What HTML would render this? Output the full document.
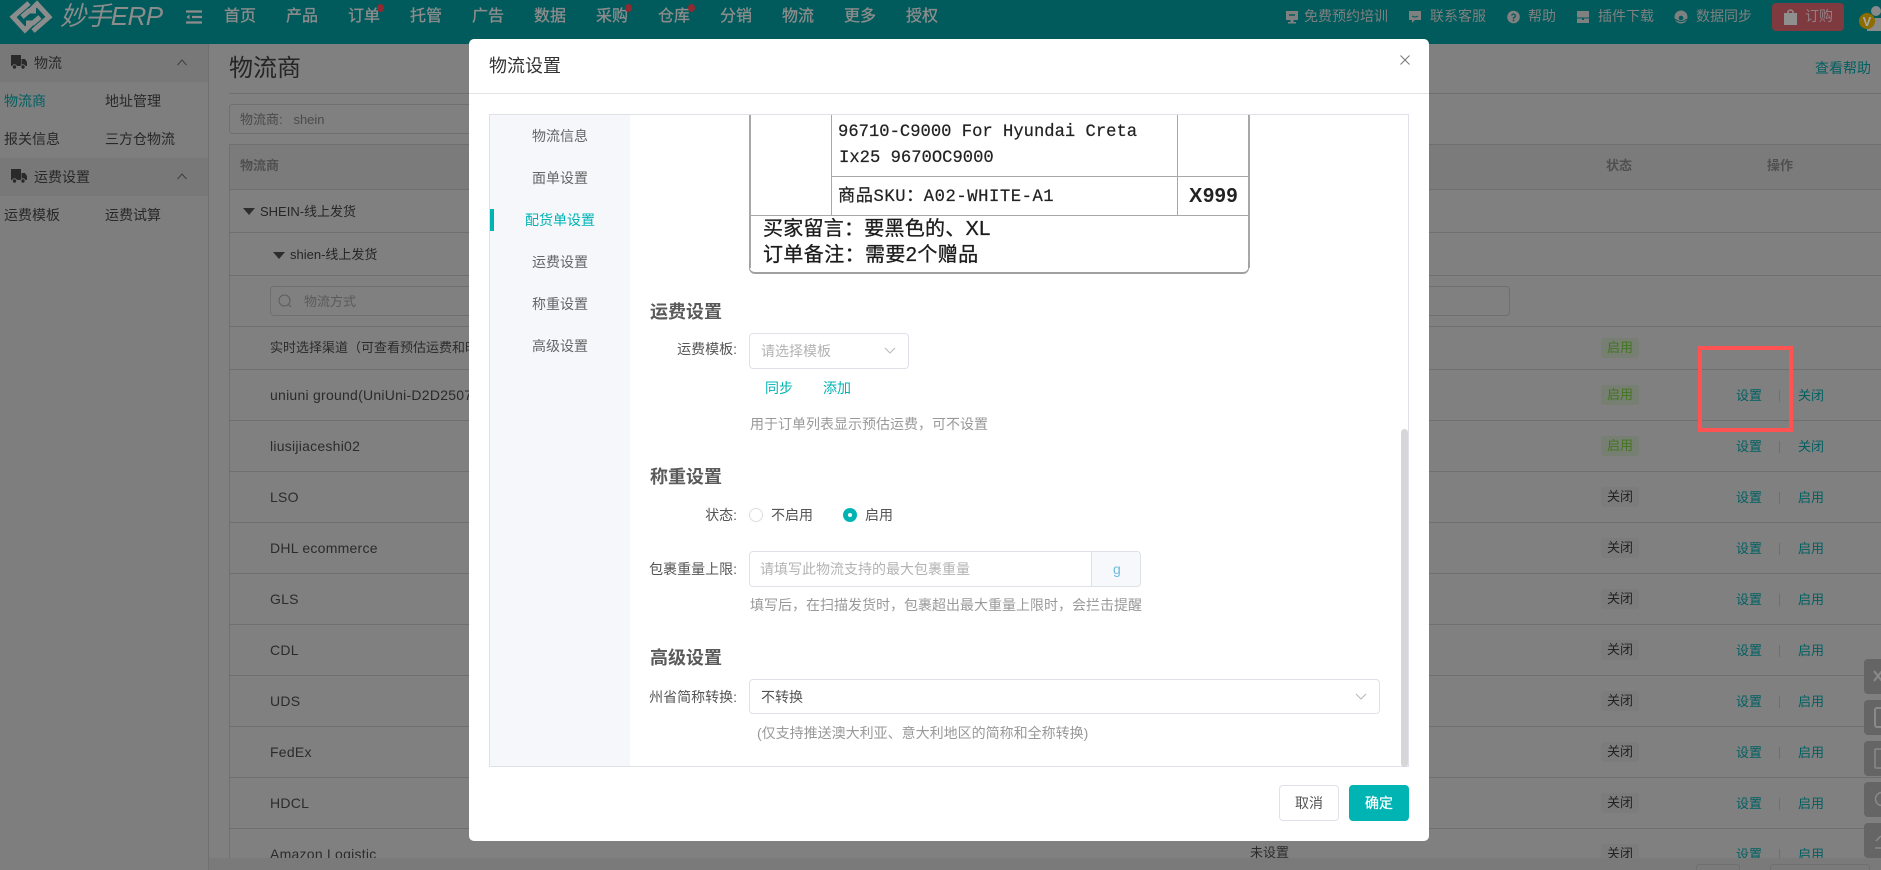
<!DOCTYPE html>
<html lang="zh"><head><meta charset="utf-8"><title>物流设置</title>
<style>
*{box-sizing:border-box}
html,body{margin:0;padding:0;width:1881px;height:870px;overflow:hidden;background:#808080}
body{position:relative;font-family:"Liberation Sans","Noto Sans CJK SC",sans-serif;font-size:14px;color:#262626}
.t{position:absolute;white-space:nowrap;line-height:20px;height:20px}
.b{position:absolute}
.nav{font-size:16px;color:#8d8d8d;-webkit-text-stroke:.3px #8d8d8d;top:7px}
.top{font-size:14px;color:#7f8080;top:6px}
.side{color:#282828}
.tl{color:#006062}
.h{background:#6f6f70;position:absolute;height:1px}
.rowt{left:270px;color:#2b2b2b;font-size:14px;letter-spacing:.25px}
.tag{position:absolute;left:1601px;width:38px;height:20px;border-radius:3px;background:#7c7c7c;color:#222;font-size:13px;line-height:20px;text-align:center}
.tag.g{background:#777f73;color:#42751f}
.op{position:absolute;color:#006062;font-size:13px;line-height:20px;white-space:nowrap;margin-top:1px}
.sep{position:absolute;left:1779px;width:1px;height:12px;background:#6f6f6f;margin-top:1px}
#modal{position:absolute;left:469px;top:39px;width:960px;height:802px;background:#fff;border-radius:5px}
.m{color:#555}
.lab{color:#555;text-align:right;left:600px;width:137px}
.head{font-size:18px;font-weight:bold;color:#5a5a5a;left:650px;line-height:24px;height:24px}
.hint{color:#999;left:750px;font-size:14px}
.in{position:absolute;background:#fff;border:1px solid #dfe1e8;border-radius:4px}
.navm{left:490px;width:140px;text-align:center;color:#666}
.fl{position:absolute;left:1864px;width:17px;height:35px;background:#656565;border-radius:4px 0 0 4px;overflow:hidden}
.mono{font-family:"Liberation Mono","Noto Sans CJK SC",monospace;color:#222;font-size:17.2px;-webkit-text-stroke:.2px #222}
.lb{position:absolute;background:#a8a8a8}
.big{font-size:20px;color:#1c1c1c;-webkit-text-stroke:.3px #1c1c1c;letter-spacing:.25px}
</style></head><body>

<!-- header -->
<div class="b" style="left:0;top:0;width:1881px;height:44px;background:#015a5b"></div>
<svg class="b" style="left:8px;top:0" width="46" height="34" viewBox="0 0 46 34"><g fill="none" stroke="#8c8c8c" stroke-width="5"><path d="M21 3 5 17l12 13 7-7"/><path d="M25 31 41 17 29 4l-7 7"/><path d="M14 17l7-6h7"/><path d="M32 17l-7 6h-7"/></g></svg>
<span class="t" style="left:60px;top:0;font-size:26px;line-height:32px;height:32px;font-style:italic;color:#8c8c8c;letter-spacing:-.6px">妙手ERP</span>
<svg class="b" style="left:186px;top:10px" width="16" height="14"><path d="M0 1.500h16M6 7h10M0 12.500h16" stroke="#8d8d8d" stroke-width="2.200"/><path d="M3.500 4.500 0.500 7l3 2.500z" fill="#8d8d8d"/></svg>
<span class="t nav" style="left:224px">首页</span>
<span class="t nav" style="left:286px">产品</span>
<span class="t nav" style="left:348px">订单</span>
<span class="t nav" style="left:410px">托管</span>
<span class="t nav" style="left:472px">广告</span>
<span class="t nav" style="left:534px">数据</span>
<span class="t nav" style="left:596px">采购</span>
<span class="t nav" style="left:658px">仓库</span>
<span class="t nav" style="left:720px">分销</span>
<span class="t nav" style="left:782px">物流</span>
<span class="t nav" style="left:844px">更多</span>
<span class="t nav" style="left:906px">授权</span>
<span class="b" style="left:377px;top:4px;width:7px;height:8px;border-radius:50%;background:#8e2a30"></span>
<span class="b" style="left:625px;top:4px;width:7px;height:8px;border-radius:50%;background:#8e2a30"></span>
<span class="b" style="left:688px;top:4px;width:7px;height:8px;border-radius:50%;background:#8e2a30"></span>

<svg class="b" style="left:1285px;top:10px" width="14" height="14"><path d="M1 1h12v9H8.500v2H11v1.500H3V12h2.500v-2H1z" fill="#7f8080"/><path d="M4 5h6" stroke="#015a5b" stroke-width="1.500"/></svg>
<span class="t top" style="left:1304px">免费预约培训</span>
<svg class="b" style="left:1408px;top:10px" width="14" height="14"><path d="M1 1h12v9H7l-3 3v-3H1z" fill="#7f8080"/><path d="M4 6q3 2 6 0" stroke="#015a5b" fill="none"/></svg>
<span class="t top" style="left:1430px">联系客服</span>
<svg class="b" style="left:1507px;top:10px" width="13" height="14"><circle cx="6.500" cy="7" r="6.300" fill="#7f8080"/><path d="M4.500 5.500q2-3 4 0 0 1.500-2 2.500v1" stroke="#015a5b" stroke-width="1.300" fill="none"/><circle cx="6.500" cy="10.500" r=".9" fill="#015a5b"/></svg>
<span class="t top" style="left:1528px">帮助</span>
<svg class="b" style="left:1577px;top:10px" width="12" height="14"><path d="M0 1h12v12H0z" fill="#7f8080"/><path d="M0 8h12" stroke="#015a5b"/><path d="M5 8h2v2H5z" fill="#015a5b"/></svg>
<span class="t top" style="left:1598px">插件下载</span>
<svg class="b" style="left:1674px;top:10px" width="14" height="14"><circle cx="7" cy="7" r="6.500" fill="#7f8080"/><circle cx="7" cy="8" r="2.300" fill="#015a5b"/><path d="M1 9q6 5 12 0" stroke="#015a5b" fill="none"/></svg>
<span class="t top" style="left:1696px">数据同步</span>
<div class="b" style="left:1772px;top:3px;width:72px;height:28px;border-radius:4px;background:#7f3a40"></div>
<svg class="b" style="left:1784px;top:9px" width="13" height="16"><path d="M0 4h13v12H0z" fill="#8f8f8f"/><path d="M4 6V2.500q2.500-3 5 0V6" stroke="#8f8f8f" stroke-width="1.500" fill="none"/></svg>
<span class="t top" style="left:1805px;color:#928084;font-size:14px">订购</span>
<svg class="b" style="left:1858px;top:5px" width="23" height="26"><circle cx="18" cy="6" r="5" fill="#8a8a8a"/><path d="M9 26v-8q0-5 5-5h9v13z" fill="#8a8a8a"/><circle cx="9" cy="16" r="8" fill="#8d6c00"/><text x="9" y="21" font-size="13" font-weight="bold" text-anchor="middle" fill="#a8a8a8" font-family="Liberation Sans">V</text></svg>

<!-- sidebar -->
<div class="b" style="left:0;top:44px;width:208px;height:826px;background:#7e7e7f"></div>
<div class="b" style="left:208px;top:44px;width:1px;height:826px;background:#707071"></div>
<div class="b" style="left:0;top:44px;width:208px;height:38px;background:#787879"></div>
<div class="b" style="left:0;top:158px;width:208px;height:38px;background:#787879"></div>
<svg class="b" style="left:11px;top:55px" width="16" height="15"><path d="M0 0h10v11H0zM10.500 4H14l2 3v4h-5.500z" fill="#2a2a2a"/><circle cx="3.500" cy="12" r="2.200" fill="#2a2a2a" stroke="#787879"/><circle cx="12" cy="12" r="2.200" fill="#2a2a2a" stroke="#787879"/></svg>
<svg class="b" style="left:11px;top:169px" width="16" height="15"><path d="M0 0h10v11H0zM10.500 4H14l2 3v4h-5.500z" fill="#2a2a2a"/><circle cx="3.500" cy="12" r="2.200" fill="#2a2a2a" stroke="#787879"/><circle cx="12" cy="12" r="2.200" fill="#2a2a2a" stroke="#787879"/></svg>
<span class="t side" style="left:34px;top:53px">物流</span>
<span class="t side" style="left:34px;top:167px">运费设置</span>
<svg class="b" style="left:177px;top:59px" width="10" height="7"><path d="M.5 6 5 1l4.500 5" stroke="#3f3f3f" fill="none"/></svg>
<svg class="b" style="left:177px;top:173px" width="10" height="7"><path d="M.5 6 5 1l4.500 5" stroke="#3f3f3f" fill="none"/></svg>
<span class="t tl" style="left:4px;top:91px">物流商</span>
<span class="t side" style="left:105px;top:91px">地址管理</span>
<span class="t side" style="left:4px;top:129px">报关信息</span>
<span class="t side" style="left:105px;top:129px">三方仓物流</span>
<span class="t side" style="left:4px;top:205px">运费模板</span>
<span class="t side" style="left:105px;top:205px">运费试算</span>

<!-- main -->
<span class="t" style="left:229px;top:53px;font-size:24px;line-height:32px;height:32px;color:#252525">物流商</span>
<span class="t tl" style="left:1815px;top:58px">查看帮助</span>
<div class="h" style="left:229px;top:93px;width:1652px"></div>
<div class="b" style="left:229px;top:104px;width:300px;height:30px;border:1px solid #6f6f70;border-radius:3px"></div>
<span class="t" style="left:240px;top:110px;font-size:13px;color:#4a4a4a">物流商:&nbsp;&nbsp;&nbsp;shein</span>

<div class="b" style="left:229px;top:144px;width:1652px;height:46px;background:#7b7b7c"></div>
<div class="b" style="left:229px;top:144px;width:1px;height:714px;background:#707071"></div>
<div class="h" style="left:229px;top:144px;width:1652px"></div>
<div class="h" style="left:229px;top:189px;width:1652px"></div>
<div class="h" style="left:229px;top:232px;width:1652px"></div>
<div class="h" style="left:229px;top:275px;width:1652px"></div>
<div class="h" style="left:229px;top:326px;width:1652px"></div>
<div class="h" style="left:229px;top:369px;width:1652px"></div>
<div class="h" style="left:229px;top:420px;width:1652px"></div>
<div class="h" style="left:229px;top:471px;width:1652px"></div>
<div class="h" style="left:229px;top:522px;width:1652px"></div>
<div class="h" style="left:229px;top:573px;width:1652px"></div>
<div class="h" style="left:229px;top:624px;width:1652px"></div>
<div class="h" style="left:229px;top:675px;width:1652px"></div>
<div class="h" style="left:229px;top:726px;width:1652px"></div>
<div class="h" style="left:229px;top:777px;width:1652px"></div>
<div class="h" style="left:229px;top:828px;width:1652px"></div>

<span class="t" style="left:240px;top:156px;font-size:13px;font-weight:bold;color:#505050">物流商</span>
<span class="t" style="left:1606px;top:156px;font-size:13px;font-weight:bold;color:#505050">状态</span>
<span class="t" style="left:1767px;top:156px;font-size:13px;font-weight:bold;color:#505050">操作</span>
<span class="b" style="left:243px;top:208px;border:6px solid transparent;border-top:7px solid #2d2d2d;border-bottom:0"></span>
<span class="t" style="left:260px;top:202px;font-size:13px;color:#262626">SHEIN-线上发货</span>
<span class="b" style="left:273px;top:252px;border:6px solid transparent;border-top:7px solid #2d2d2d;border-bottom:0"></span>
<span class="t" style="left:290px;top:245px;font-size:13px;color:#262626">shien-线上发货</span>
<div class="b" style="left:270px;top:286px;width:1240px;height:30px;border:1px solid #6f6f70;border-radius:4px"></div>
<svg class="b" style="left:277px;top:293px" width="16" height="16"><circle cx="7.500" cy="7.500" r="5.500" stroke="#5d5d5d" fill="none"/><path d="M11.500 11.500 14 14" stroke="#5d5d5d"/></svg>
<span class="t" style="left:304px;top:292px;font-size:13px;color:#5a5a5a">物流方式</span>

<span class="t rowt" style="top:338px;letter-spacing:0;font-size:13px">实时选择渠道（可查看预估运费和时效）</span>
<span class="t rowt" style="top:385px">uniuni ground(UniUni-D2D2507)</span>
<span class="t rowt" style="top:436px">liusijiaceshi02</span>
<span class="t rowt" style="top:487px">LSO</span>
<span class="t rowt" style="top:538px">DHL ecommerce</span>
<span class="t rowt" style="top:589px">GLS</span>
<span class="t rowt" style="top:640px">CDL</span>
<span class="t rowt" style="top:691px">UDS</span>
<span class="t rowt" style="top:742px">FedEx</span>
<span class="t rowt" style="top:793px">HDCL</span>
<span class="t rowt" style="top:844px">Amazon Logistic</span>

<div class="tag g" style="top:338px">启用</div>
<div class="tag g" style="top:385px">启用</div>
<div class="tag g" style="top:436px">启用</div>
<div class="tag" style="top:487px">关闭</div>
<div class="tag" style="top:538px">关闭</div>
<div class="tag" style="top:589px">关闭</div>
<div class="tag" style="top:640px">关闭</div>
<div class="tag" style="top:691px">关闭</div>
<div class="tag" style="top:742px">关闭</div>
<div class="tag" style="top:793px">关闭</div>
<div class="tag" style="top:844px">关闭</div>

<span class="op" style="left:1736px;top:385px">设置</span><span class="sep" style="top:389px"></span><span class="op" style="left:1798px;top:385px">关闭</span>
<span class="op" style="left:1736px;top:436px">设置</span><span class="sep" style="top:440px"></span><span class="op" style="left:1798px;top:436px">关闭</span>
<span class="op" style="left:1736px;top:487px">设置</span><span class="sep" style="top:491px"></span><span class="op" style="left:1798px;top:487px">启用</span>
<span class="op" style="left:1736px;top:538px">设置</span><span class="sep" style="top:542px"></span><span class="op" style="left:1798px;top:538px">启用</span>
<span class="op" style="left:1736px;top:589px">设置</span><span class="sep" style="top:593px"></span><span class="op" style="left:1798px;top:589px">启用</span>
<span class="op" style="left:1736px;top:640px">设置</span><span class="sep" style="top:644px"></span><span class="op" style="left:1798px;top:640px">启用</span>
<span class="op" style="left:1736px;top:691px">设置</span><span class="sep" style="top:695px"></span><span class="op" style="left:1798px;top:691px">启用</span>
<span class="op" style="left:1736px;top:742px">设置</span><span class="sep" style="top:746px"></span><span class="op" style="left:1798px;top:742px">启用</span>
<span class="op" style="left:1736px;top:793px">设置</span><span class="sep" style="top:797px"></span><span class="op" style="left:1798px;top:793px">启用</span>
<span class="op" style="left:1736px;top:844px">设置</span><span class="sep" style="top:848px"></span><span class="op" style="left:1798px;top:844px">启用</span>

<!-- footer strip -->
<div class="b" style="left:209px;top:858px;width:1672px;height:12px;background:#7a7a7b"></div>
<div class="b" style="left:1696px;top:864px;width:44px;height:10px;border:1px solid #6f6f70;border-radius:3px"></div>
<div class="b" style="left:1770px;top:864px;width:100px;height:10px;border:1px solid #6f6f70;border-radius:3px"></div>
<span class="t" style="left:1250px;top:843px;color:#2b2b2b;font-size:13px">未设置</span>

<!-- red box -->
<div class="b" style="left:1698px;top:346px;width:95px;height:86px;border:4px solid #ff5252"></div>

<!-- floating -->
<div class="fl" style="top:659px"><svg width="17" height="35"><path d="M10 12 18 22M18 12 10 22" stroke="#8a8a8a" stroke-width="2"/></svg></div>
<div class="fl" style="top:700px"><svg width="17" height="35"><rect x="11" y="8" width="12" height="19" rx="2" stroke="#8a8a8a" stroke-width="2" fill="none"/></svg></div>
<div class="fl" style="top:741px"><svg width="17" height="35"><rect x="11" y="8" width="12" height="19" rx="1" stroke="#8a8a8a" stroke-width="1.500" fill="none"/></svg></div>
<div class="fl" style="top:782px"><svg width="17" height="35"><circle cx="18" cy="17" r="6.500" stroke="#8a8a8a" stroke-width="1.500" fill="none"/></svg></div>
<div class="fl" style="top:823px"><svg width="17" height="35"><path d="M11 25h8M12 18l5-5" stroke="#8a8a8a" stroke-width="1.500" fill="none"/></svg></div>

<!-- modal -->
<div id="modal"></div>
<span class="t" style="left:489px;top:54px;font-size:18px;line-height:24px;height:24px;color:#333">物流设置</span>
<svg class="b" style="left:1400px;top:55px" width="10" height="10"><path d="M.5.500l9 9M9.500.500l-9 9" stroke="#777" stroke-width="1"/></svg>
<div class="b" style="left:469px;top:93px;width:960px;height:1px;background:#e3e4e8"></div>

<div class="b" style="left:489px;top:114px;width:920px;height:653px;border:1px solid #dfe1e8"></div>
<div class="b" style="left:490px;top:115px;width:140px;height:651px;background:#f5f7fb"></div>
<span class="t navm" style="top:126px">物流信息</span>
<span class="t navm" style="top:168px">面单设置</span>
<span class="t navm" style="top:210px;color:#00b4b4">配货单设置</span>
<span class="t navm" style="top:252px">运费设置</span>
<span class="t navm" style="top:294px">称重设置</span>
<span class="t navm" style="top:336px">高级设置</span>
<div class="b" style="left:490px;top:209px;width:4px;height:22px;background:#00b4b4"></div>

<!-- label image -->
<div class="lb" style="left:749px;top:115px;width:1.500px;height:153px"></div>
<div class="lb" style="left:1248px;top:115px;width:1.500px;height:153px"></div>
<div class="lb" style="left:831px;top:115px;width:1px;height:100px"></div>
<div class="lb" style="left:1177px;top:115px;width:1px;height:100px"></div>
<div class="lb" style="left:832px;top:175.500px;width:417px;height:1.500px"></div>
<div class="lb" style="left:749px;top:214.500px;width:500px;height:1.500px"></div>
<div class="b" style="left:749px;top:262px;width:500px;height:12px;border:solid #a0a0a0;border-width:0 1.500px 2px 1.500px;border-radius:0 0 6px 6px"></div>
<span class="t mono" style="left:838px;top:121px;margin-top:2px">96710-C9000 For Hyundai Creta</span>
<span class="t mono" style="left:839px;top:149px">Ix25 9670OC9000</span>
<span class="t mono" style="left:838px;top:188px;letter-spacing:.55px">商品SKU：A02-WHITE-A1</span>
<span class="t" style="left:1189px;top:186px;font-size:20px;font-weight:bold;color:#222;letter-spacing:.6px">X999</span>
<span class="t big" style="left:763px;top:219px">买家留言：要黑色的、XL</span>
<span class="t big" style="left:763px;top:245px;letter-spacing:.4px">订单备注：需要2个赠品</span>

<span class="t head" style="top:300px">运费设置</span>
<span class="t lab" style="top:339px">运费模板:</span>
<div class="in" style="left:749px;top:333px;width:160px;height:36px"></div>
<span class="t" style="left:761px;top:341px;color:#b3b3b3">请选择模板</span>
<svg class="b" style="left:884px;top:347px" width="12" height="8"><path d="M1 1l5 5 5-5" stroke="#b8b8b8" fill="none"/></svg>
<span class="t" style="left:765px;top:378px;color:#00b4b4">同步</span>
<span class="t" style="left:823px;top:378px;color:#00b4b4">添加</span>
<span class="t hint" style="top:414px">用于订单列表显示预估运费，可不设置</span>

<span class="t head" style="top:465px">称重设置</span>
<span class="t lab" style="top:505px">状态:</span>
<span class="b" style="left:749px;top:508px;width:14px;height:14px;border:1px solid #dcdee4;border-radius:50%"></span>
<span class="t" style="left:771px;top:505px;color:#555">不启用</span>
<span class="b" style="left:843px;top:508px;width:14px;height:14px;border-radius:50%;background:#00b4b4"></span>
<span class="b" style="left:848px;top:513px;width:4px;height:4px;border-radius:50%;background:#fff"></span>
<span class="t" style="left:865px;top:505px;color:#555">启用</span>

<span class="t lab" style="top:559px">包裹重量上限:</span>
<div class="in" style="left:749px;top:551px;width:392px;height:36px"></div>
<div class="b" style="left:1091px;top:552px;width:49px;height:34px;background:#f6f8fb;border-left:1px solid #dfe1e8;border-radius:0 4px 4px 0"></div>
<span class="t" style="left:1113px;top:559px;color:#6cbbe0">g</span>
<span class="t" style="left:760px;top:559px;color:#b3b3b3">请填写此物流支持的最大包裹重量</span>
<span class="t hint" style="top:595px">填写后，在扫描发货时，包裹超出最大重量上限时，会拦击提醒</span>

<span class="t head" style="top:646px">高级设置</span>
<span class="t lab" style="top:687px">州省简称转换:</span>
<div class="in" style="left:749px;top:679px;width:631px;height:35px"></div>
<span class="t" style="left:761px;top:687px;color:#555">不转换</span>
<svg class="b" style="left:1355px;top:693px" width="12" height="8"><path d="M1 1l5 5 5-5" stroke="#b8b8b8" fill="none"/></svg>
<span class="t hint" style="left:757px;top:723px">(仅支持推送澳大利亚、意大利地区的简称和全称转换)</span>

<div class="b" style="left:1401px;top:429px;width:7px;height:338px;border-radius:4px;background:#d6d6d8"></div>

<div class="in" style="left:1279px;top:785px;width:60px;height:36px;color:#555;text-align:center;line-height:34px">取消</div>
<div class="b" style="left:1349px;top:785px;width:60px;height:36px;border-radius:4px;background:#00b4b4;color:#fff;text-align:center;line-height:36px;font-size:14px;-webkit-text-stroke:.25px #fff">确定</div>

</body></html>
